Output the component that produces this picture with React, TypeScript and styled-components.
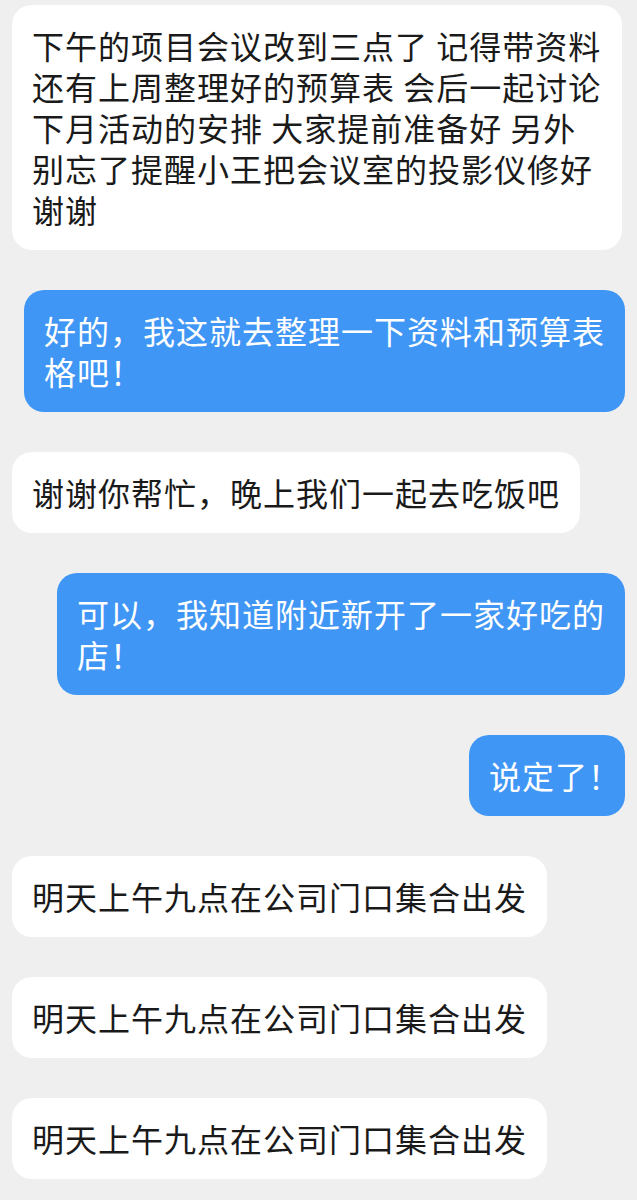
import React from 'react';
import styled, { createGlobalStyle } from 'styled-components';

type Side = 'left' | 'right';

interface Message {
  id: number;
  side: Side;
  text: string;
  maxWidth?: number;
}

// neutral placeholder copy, lengths chosen so the bubbles wrap like the reference
const messages: Message[] = [
  {
    id: 1,
    side: 'left',
    text: '下午的项目会议改到三点了 记得带资料还有上周整理好的预算表 会后一起讨论下月活动的安排 大家提前准备好 另外别忘了提醒小王把会议室的投影仪修好谢谢',
  },
  { id: 2, side: 'right', text: '好的，我这就去整理一下资料和预算表格吧！' },
  { id: 3, side: 'left', text: '谢谢你帮忙，晚上我们一起去吃饭吧' },
  { id: 4, side: 'right', text: '可以，我知道附近新开了一家好吃的店！', maxWidth: 568 },
  { id: 5, side: 'right', text: '说定了！' },
  { id: 6, side: 'left', text: '明天上午九点在公司门口集合出发' },
  { id: 7, side: 'left', text: '明天上午九点在公司门口集合出发' },
  { id: 8, side: 'left', text: '明天上午九点在公司门口集合出发' },
];

const GlobalStyle = createGlobalStyle`
  html, body {
    margin: 0;
    padding: 0;
    background: #efefef;
  }
`;

const Page = styled.div`
  display: flex;
  flex-direction: column;
  gap: 40px;
  min-height: 1200px;
  padding: 5px 12px 24px 12px;
  box-sizing: border-box;
  background: #efefef;
  font-family: 'Noto Sans CJK SC', 'Noto Sans', sans-serif;
`;

const Row = styled.div<{ $side: Side }>`
  display: flex;
  justify-content: ${({ $side }) => ($side === 'right' ? 'flex-end' : 'flex-start')};
`;

const Bubble = styled.div<{ $side: Side; $maxWidth?: number }>`
  box-sizing: border-box;
  max-width: ${({ $side, $maxWidth }) =>
    $maxWidth ? `${$maxWidth}px` : $side === 'right' ? '601px' : '610px'};
  padding: 20px 20px;
  border-radius: 20px;
  font-size: 32px;
  line-height: 41px;
  letter-spacing: 1px;
  line-break: strict;
  background: ${({ $side }) => ($side === 'right' ? '#4096f5' : '#ffffff')};
  color: ${({ $side }) => ($side === 'right' ? '#ffffff' : '#1a1a1a')};
`;

// trailing full-width punctuation is set narrow, as in the reference
const TailPunct = styled.span`
  font-feature-settings: 'halt';
`;

function renderText(text: string) {
  if (text.endsWith('！')) {
    return (
      <>
        {text.slice(0, -1)}
        <TailPunct>！</TailPunct>
      </>
    );
  }
  return text;
}

export default function App() {
  return (
    <>
      <GlobalStyle />
      <Page>
        {messages.map((m) => (
          <Row key={m.id} $side={m.side}>
            <Bubble $side={m.side} $maxWidth={m.maxWidth}>
              {renderText(m.text)}
            </Bubble>
          </Row>
        ))}
      </Page>
    </>
  );
}
